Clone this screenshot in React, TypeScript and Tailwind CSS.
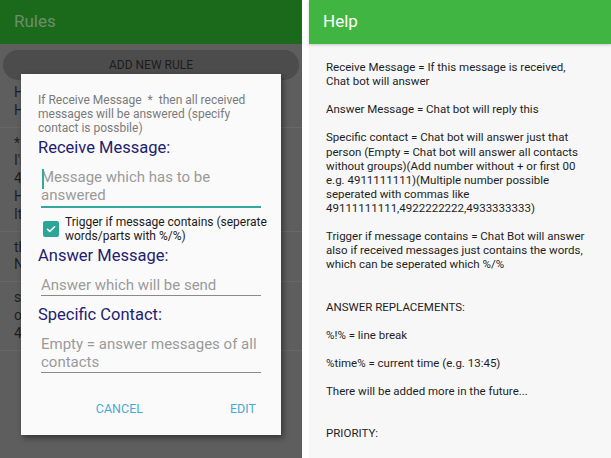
import React from "react";

const helpText = `Receive Message = If this message is received,
Chat bot will answer

Answer Message = Chat bot will reply this

Specific contact = Chat bot will answer just that
person (Empty = Chat bot will answer all contacts
without groups)(Add number without + or first 00
e.g. 4911111111)(Multiple number possible
seperated with commas like
49111111111,4922222222,4933333333)

Trigger if message contains = Chat Bot will answer
also if received messages just contains the words,
which can be seperated which %/%


ANSWER REPLACEMENTS:

%!% = line break

%time% = current time (e.g. 13:45)

There will be added more in the future...


PRIORITY:`;

const rows: string[][] = [
  ["Hello", "Hi there"],
  ["*", "I'm not available right now", "49111111111", "How are you?", "It's fine"],
  ["thanks", "No problem"],
  ["see you", "ok", "4922222222"],
];

export default function App() {
  const font = { fontFamily: "Roboto, 'Noto Sans', sans-serif" };
  return (
    <div className="w-[611px] h-[458px] flex bg-white overflow-hidden" style={font}>
      {/* Left: Rules with dialog */}
      <div className="w-[302px] h-full relative overflow-hidden bg-[#5e5e5e] flex flex-col">
        <div className="h-[44px] bg-[#1b6a1b] flex items-center pl-[14px] shrink-0">
          <span className="text-[17px] text-[#6b8f6b]">Rules</span>
        </div>
        <div className="px-[3px] pt-[6px]">
          <div className="h-[30px] rounded-full bg-[#4c4c4c] flex items-center justify-center text-[12px] text-[#1c1c1c]">
            ADD NEW RULE
          </div>
        </div>
        <div className="flex flex-col mt-[-3px]">
          {rows.map((r, i) => (
            <div key={i} className="pl-[14px] py-[7px] border-b border-[#676767] text-[14px] leading-[17.8px] text-[#1e1e1e] whitespace-nowrap">
              {r.map((l, j) => (
                <div key={j}>{l}</div>
              ))}
            </div>
          ))}
        </div>

        {/* Dialog */}
        <div className="absolute left-[21px] top-[74px] w-[260px] h-[361px] bg-[#fafafa] shadow-[2px_3px_6px_rgba(0,0,0,0.45)] pl-[17px] pr-[14px] pt-[19px]">
          <div className="text-[12px] leading-[14px] text-[#7a7a7a] pr-[3px]">
            If Receive Message &nbsp;*&nbsp; then all received messages will be answered (specify contact is possbile)
          </div>
          <div className="mt-[2px] text-[16.5px] leading-[22px] text-[#1f2070]">Receive Message:</div>
          <div className="mt-[9px] ml-[3px] mr-[6px] relative border-b-2 border-[#35a79c] pb-[2px] text-[15px] leading-[18px] text-[#9a9a9a]">
            <span className="absolute left-[1px] top-[1px] w-[2px] h-[20px] bg-[#35a79c]" />
            Message which has to be answered
          </div>
          <div className="mt-[7px] ml-[5px] flex items-start gap-[6px]">
            <div className="w-[16px] h-[16px] mt-[6px] rounded-[2px] bg-[#2aa597] flex items-center justify-center shrink-0">
              <svg width="12" height="12" viewBox="0 0 24 24" fill="none" stroke="white" strokeWidth="3.2" strokeLinecap="round" strokeLinejoin="round">
                <path d="M5 12.5l4.5 4.5L19 7.5" />
              </svg>
            </div>
            <div className="text-[12px] leading-[14px] text-[#1a1a1a]">
              Trigger if message contains (seperate words/parts with %/%)
            </div>
          </div>
          <div className="mt-[2px] text-[16.5px] leading-[22px] text-[#1f2070]">Answer Message:</div>
          <div className="mt-[9px] ml-[3px] mr-[6px] border-b border-[#8a8a8a] pb-[1px] text-[15px] leading-[18px] text-[#9a9a9a]">
            Answer which will be send
          </div>
          <div className="mt-[8px] text-[16.5px] leading-[22px] text-[#1f2070]">Specific Contact:</div>
          <div className="mt-[9px] ml-[3px] mr-[6px] border-b border-[#8a8a8a] pb-[1px] text-[15px] leading-[18px] text-[#9a9a9a]">
            Empty = answer messages of all contacts
          </div>
          <div className="mt-[28px] flex justify-end gap-[87px] pr-[11px] text-[12.5px] leading-[16px] text-[#4aa8d8]">
            <span>CANCEL</span>
            <span>EDIT</span>
          </div>
        </div>
      </div>

      <div className="w-[7px] h-full bg-white shrink-0" />

      {/* Right: Help */}
      <div className="flex-1 h-full flex flex-col bg-[#f7f7f7]">
        <div className="h-[44px] bg-[#41b541] flex items-center pl-[14px] shrink-0 shadow-[0_1px_3px_rgba(0,0,0,0.2)]">
          <span className="text-[17px] text-white">Help</span>
        </div>
        <div className="pl-[17px] pt-[16px] text-[11.5px] leading-[14.1px] text-[#1e1e1e] whitespace-pre-line">
          {helpText}
        </div>
      </div>
    </div>
  );
}
